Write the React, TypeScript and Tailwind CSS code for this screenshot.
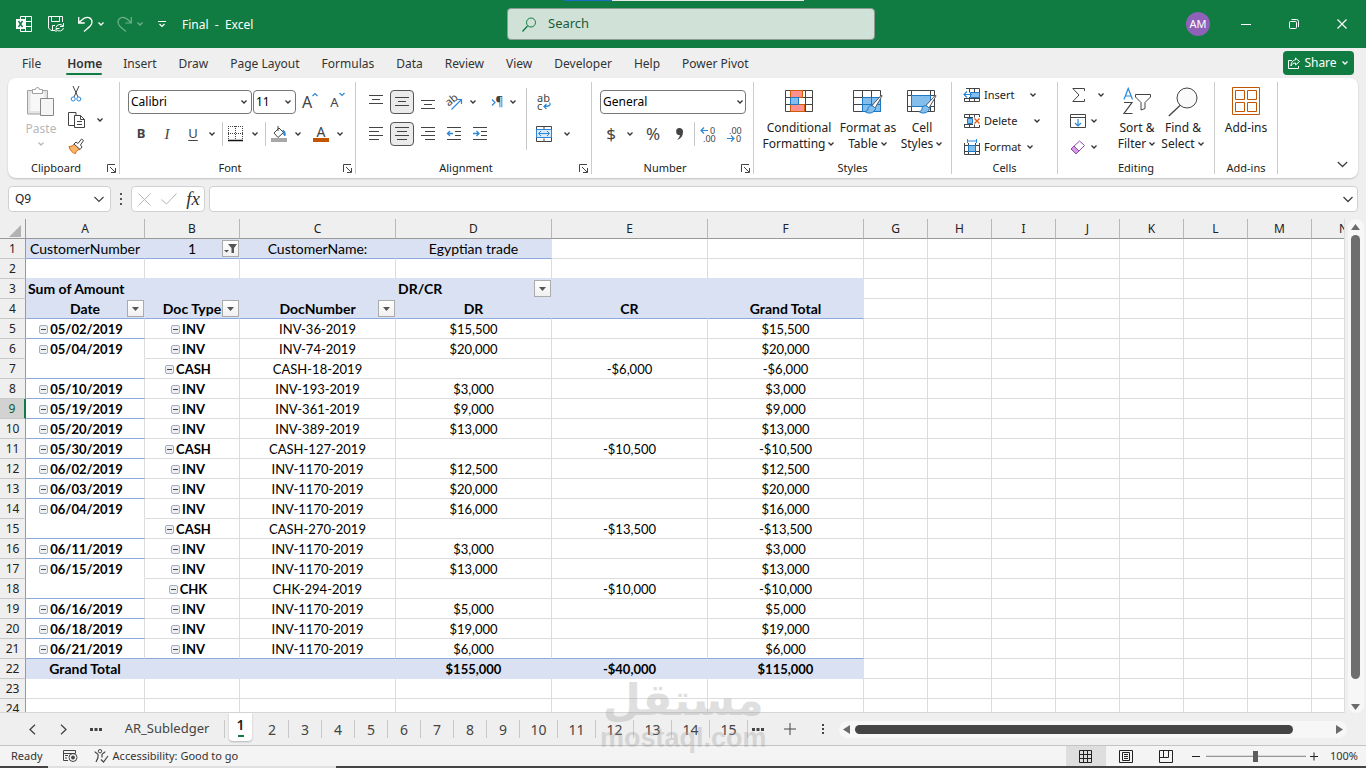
import { useState, type ReactNode } from "react";

type IconProps = { w: number; h: number; children: ReactNode; stroke?: string };

function Icon({ w, h, children, stroke = "#444444" }: IconProps) {
  return (
    <svg
      width={w}
      height={h}
      viewBox={`0 0 ${w} ${h}`}
      fill="none"
      stroke={stroke}
      className="shrink-0 overflow-visible"
      aria-hidden="true"
    >
      {children}
    </svg>
  );
}

function Chevron({ stroke = "#333333" }: { stroke?: string }) {
  return (
    <Icon w={8} h={6} stroke={stroke}>
      <path d="M1.500 1.500 4 4 6.500 1.500" strokeWidth="1.300" />
    </Icon>
  );
}

function DropButton({ label, className = "mr-1" }: { label: string; className?: string }) {
  return (
    <button aria-label={label} className={`flex h-6 w-3 shrink-0 items-center justify-center ${className}`}>
      <Chevron />
    </button>
  );
}

type ToolProps = { label: string; children: ReactNode; active?: boolean };

function Tool({ label, children, active }: ToolProps) {
  return (
    <button
      aria-label={label}
      className={
        active
          ? "mx-px flex h-6 w-6 shrink-0 items-center justify-center rounded border border-[#555555] bg-[#ebebeb]"
          : "flex h-6 w-[26px] shrink-0 items-center justify-center"
      }
    >
      {children}
    </button>
  );
}

function Divider({ className = "h-6" }: { className?: string }) {
  return <span className={`w-px shrink-0 bg-[#c8c8c8] ${className}`} />;
}

// Each line is [x, width], one every four pixels
function Lines({ rows }: { rows: [number, number][] }) {
  return (
    <Icon w={14} h={14}>
      {rows.map(([x, width], i) => (
        <path key={i} d={`M${x} ${i * 4 + 0.5}h${width}`} />
      ))}
    </Icon>
  );
}

function Launcher({ label }: { label: string }) {
  return (
    <button aria-label={label} className="flex h-4 w-[15px] items-center justify-center">
      <Icon w={9} h={9}>
        <path d="M8 .5H.5V8M3 3l5 5M8.500 4v4.500H4" />
      </Icon>
    </button>
  );
}

type GroupProps = {
  title: string;
  className: string;
  body?: string;
  launcher?: boolean;
  children: ReactNode;
};

function Group({ title, className, body = "", launcher, children }: GroupProps) {
  return (
    <section className={`my-1 flex shrink-0 flex-col border-r border-[#cccccc] ${className}`}>
      <div className={`h-[78px] shrink-0 ${body}`}>{children}</div>
      <div className="flex h-4 shrink-0 items-center text-[11px] leading-4 text-[#222222]">
        <span className="flex-1 text-center">{title}</span>
        {launcher && <Launcher label={`${title} settings`} />}
      </div>
    </section>
  );
}

type BigProps = { lines: string[]; className: string; drop?: boolean; children: ReactNode };

function BigButton({ lines, className, drop = true, children }: BigProps) {
  return (
    <button className={`flex shrink-0 flex-col items-center text-[12px] leading-4 text-[#222222] ${className}`}>
      <span className="flex h-9 items-center">{children}</span>
      {lines.map((line, i) => (
        <span key={line} className="flex items-center gap-0.5 whitespace-nowrap">
          {line}
          {drop && i === lines.length - 1 && <Chevron />}
        </span>
      ))}
    </button>
  );
}

function TitleBar() {
  return (
    <header className="relative flex h-12 shrink-0 items-center bg-[#107c41] text-white">
      <div className="absolute top-0 left-[564px] flex h-px w-60">
        <span className="w-12 bg-[#1a6fc4]" />
        <span className="flex-1 bg-[#e8e8e8]" />
      </div>
      <div className="flex w-[507px] shrink-0 items-center pl-4">
        <Icon w={16} h={16} stroke="#ffffff">
          <path d="M4.500 3V.5h11v15h-11V13M9.500 .5v15M9 5.500h6.500M9 10.500h6.500" />
          <path d="M0 3h9v10H0z" fill="#ffffff" stroke="none" />
          <path d="m2.500 5 4 6M6.500 5l-4 6" stroke="#107c41" strokeWidth="1.400" />
        </Icon>
        <button aria-label="Save" className="ml-4">
          <Icon w={16} h={16} stroke="#ffffff">
            <path d="M7 14.500H3L.5 12V.5h14V6M3.500 .5v5h8v-5M4.500 14V9.500H7" />
            <path d="M8 11.500a4 4 0 0 1 7-1.500M15.500 7v3.500H12M15.500 12a4 4 0 0 1-7 1.500M8 16v-3.500h3.500" />
          </Icon>
        </button>
        <button aria-label="Undo" className="ml-3.5 flex items-center gap-1">
          <Icon w={15} h={16} stroke="#ffffff">
            <path d="M.7 1v6h6M1 6.500 5 3c4-3.500 9-1 9 3 0 3-2 4.500-8 9.500" strokeWidth="1.300" />
          </Icon>
          <Chevron stroke="#ffffff" />
        </button>
        <button aria-label="Redo" disabled className="ml-3 flex items-center gap-1 opacity-40">
          <Icon w={15} h={16} stroke="#ffffff">
            <path d="M14.300 1v6h-6M14 6.500 10 3C6-.5 1 2 1 6c0 3 2 4.500 8 9.500" strokeWidth="1.200" />
          </Icon>
          <Chevron stroke="#ffffff" />
        </button>
        <button aria-label="Customize toolbar" className="ml-3.5">
          <Icon w={8} h={8} stroke="#ffffff">
            <path d="M0 1.500h8M1.500 4 4 6.500 6.500 4" strokeWidth="1.200" />
          </Icon>
        </button>
        <h1 className="ml-4 pt-px text-[12px] whitespace-pre">Final  -  Excel</h1>
      </div>
      <label className="flex h-8 w-[368px] shrink-0 items-center rounded-sm border border-[#8c9c92] bg-[#d0e2d8] pl-3.5 text-[#185c37]">
        <Icon w={14} h={15} stroke="#107c41">
          <circle cx="9" cy="5.500" r="4.500" />
          <path d="M5.500 9 .5 14.500" strokeWidth="1.300" />
        </Icon>
        <input
          aria-label="Search"
          placeholder="Search"
          className="ml-3 w-full bg-transparent text-[13px] outline-none placeholder:text-[#185c37]"
        />
      </label>
      <div className="flex flex-1 items-center justify-end">
        <button className="mr-3 flex h-6 w-6 items-center justify-center rounded-full bg-[#8f61b8] text-[11px]">AM</button>
        <button aria-label="Minimize" className="flex w-12 justify-center">
          <Icon w={10} h={11} stroke="#ffffff">
            <path d="M0 5.500h10" />
          </Icon>
        </button>
        <button aria-label="Restore" className="flex w-12 justify-center">
          <Icon w={10} h={11} stroke="#ffffff">
            <rect x=".5" y="2.500" width="7" height="7" rx="1" />
            <path d="M2.500 .5h5a2 2 0 0 1 2 2v5.500" />
          </Icon>
        </button>
        <button aria-label="Close" className="flex w-12 justify-center">
          <Icon w={10} h={10} stroke="#ffffff">
            <path d="m.5.5 9 9M9.500.5l-9 9" strokeWidth="1.200" />
          </Icon>
        </button>
      </div>
    </header>
  );
}

const menu = [
  "File",
  "Home",
  "Insert",
  "Draw",
  "Page Layout",
  "Formulas",
  "Data",
  "Review",
  "View",
  "Developer",
  "Help",
  "Power Pivot",
];

function MenuBar() {
  return (
    <nav className="flex h-[30px] shrink-0 items-center pr-3 pl-[11px] text-[12px] text-[#333333]">
      {menu.map((name) => (
        <button
          key={name}
          className={
            name === "Home"
              ? "relative ml-1 flex h-full items-center pt-0.5 pr-2.5 pl-[11px] font-semibold text-[#333333] after:absolute after:inset-x-2.5 after:bottom-[3px] after:h-0.5 after:rounded after:bg-[#107c41]"
              : "h-full px-[11px] pt-0.5 whitespace-nowrap"
          }
        >
          {name}
        </button>
      ))}
      <button className="ml-auto flex h-6 w-[71px] items-center justify-center gap-1 rounded bg-[#107c41] text-white">
        <Icon w={12} h={12} stroke="#ffffff">
          <path d="M4 3.500H.5v8h10V9M7.500 1l4 3.500-4 3.500V6C5 6 4 7 3 9c0-3 1.500-6 4.500-6z" />
        </Icon>
        Share
        <Chevron stroke="#ffffff" />
      </button>
    </nav>
  );
}

function Brush() {
  return (
    <>
      <path d="M28.500 7 19 17.500l3 2.500L29 8z" fill="#ffffff" stroke="#555555" />
      <path d="M20 18c-3-1-5 .5-5 3 0 1.500-1.500 2.500-3 2.500 3 3 10 1.500 10.500-3z" fill="#83beec" stroke="#1e78c8" />
    </>
  );
}

function Ribbon() {
  return (
    <div className="mx-2 flex h-[100px] shrink-0 overflow-hidden rounded-lg bg-white shadow-[0_1px_2px_rgba(0,0,0,0.2)]">
      <Group title="Clipboard" launcher className="w-28" body="pl-3">
        <div className="flex pt-0.5">
          <button disabled className="flex w-[42px] flex-col items-center pt-0.5 text-[12px] leading-4 text-[#b8b8b8]">
            <Icon w={28} h={31} stroke="#a0a0a0">
              <path d="M.5 4.500h20V28H.5z" fill="#e4e4e4" />
              <path d="M3.500 7h14v18h-14z" fill="#f8f8f8" stroke="none" />
              <path d="M5.500 7.500v-4h3a2 2 0 0 1 4 0h3v4z" fill="#ffffff" />
              <path d="M13.500 12.500h13v17h-13z" fill="#f5f5f5" stroke="#888888" />
            </Icon>
            <span className="mt-1">Paste</span>
            <span className="mt-1">
              <Chevron stroke="#b8b8b8" />
            </span>
          </button>
          <div className="ml-1 flex flex-col">
            <button aria-label="Cut" className="flex h-5 w-5 items-center justify-center">
              <Icon w={10} h={16}>
                <path d="M2 0 7 11M8 0 3 11" />
                <circle cx="2.200" cy="13" r="2" stroke="#2b88d8" />
                <circle cx="7.800" cy="13" r="2" stroke="#2b88d8" />
              </Icon>
            </button>
            <div className="mt-1 flex items-center">
              <button aria-label="Copy" className="flex h-6 w-5 items-center justify-center">
                <Icon w={17} h={16}>
                  <path d="M6 13.500H.5V.5H8V3" />
                  <path d="M6.500 3.500h6l4 4v8h-10zM12.500 3.500v4h4M9 9.500h5M9 12.500h5" />
                </Icon>
              </button>
              <DropButton label="Copy options" className="ml-2" />
            </div>
            <button aria-label="Format painter" className="mt-1 flex h-5 w-5 items-center justify-center">
              <Icon w={16} h={16}>
                <path d="M1 8.500c3 0 4-1 5-2.500l6 5.500c-2 0-4 1.500-4.500 4C5 15.500 2 12.500 1 8.500z" fill="#f8b46a" stroke="#d8680c" />
                <path d="m6 6 2-2 2 1.500 3.500-4.500 2 1.500-3 4.500L14 9l-2 2.500z" fill="#ffffff" />
              </Icon>
            </button>
          </div>
        </div>
      </Group>

      <Group title="Font" launcher className="w-[236px]" body="pl-2">
        <div className="flex items-center pt-2">
          <div className="grid h-6 w-[124px] items-center">
            <select aria-label="Font name" className="col-start-1 row-start-1 h-6 appearance-none rounded border border-[#777777] bg-white pl-0.5 text-[12px] text-black">
              <option>Calibri</option>
            </select>
            <span className="pointer-events-none col-start-1 row-start-1 mr-1 justify-self-end">
              <Chevron />
            </span>
          </div>
          <div className="ml-px grid h-6 w-[43px] items-center">
            <select aria-label="Font size" className="col-start-1 row-start-1 h-6 appearance-none rounded border border-[#777777] bg-white pl-0.5 text-[12px] text-black">
              <option>11</option>
            </select>
            <span className="pointer-events-none col-start-1 row-start-1 mr-1 justify-self-end">
              <Chevron />
            </span>
          </div>
          <button aria-label="Increase font size" className="ml-1.5 flex items-start text-[16px] leading-5 text-[#444444]">
            A
            <Icon w={6} h={5} stroke="#2b88d8">
              <path d="M.5 4 3 1.500 5.500 4" strokeWidth="1.200" />
            </Icon>
          </button>
          <button aria-label="Decrease font size" className="ml-3 flex items-start text-[13px] leading-5 text-[#444444]">
            A
            <Icon w={6} h={5} stroke="#2b88d8">
              <path d="M.5 1 3 3.500 5.500 1" strokeWidth="1.200" />
            </Icon>
          </button>
        </div>
        <div className="mt-2 flex items-center text-[13px] text-[#444444]">
          <Tool label="Bold">
            <b>B</b>
          </Tool>
          <Tool label="Italic">
            <i className="font-['Liberation_Serif',serif] text-[15px]">I</i>
          </Tool>
          <Tool label="Underline">
            <span className="underline underline-offset-2">U</span>
          </Tool>
          <DropButton label="Underline options" />
          <Divider />
          <Tool label="Borders">
            <Icon w={16} h={16}>
              <path d="M0 .5h15M0 7.500h15M.5 0v14M7.500 0v14M14.500 0v14" strokeDasharray="1 1" />
              <path d="M0 14.500h15" stroke="#111111" strokeWidth="1.500" />
            </Icon>
          </Tool>
          <DropButton label="Border options" />
          <Divider />
          <Tool label="Fill colour">
            <Icon w={16} h={16}>
              <path d="m3 7 5-5 4.500 4.500L7 11.500zM7 0v5" />
              <path d="M12 4c2 1 2.500 3 2 6-1.500-1-1.500-2-2-6z" fill="#2b88d8" stroke="#2b88d8" />
              <path d="M0 12h16v4H0z" fill="#a8a8a8" stroke="none" />
            </Icon>
          </Tool>
          <DropButton label="Fill options" />
          <Tool label="Font colour">
            <span className="flex w-4 flex-col items-center border-b-4 border-[#c45500] text-[14px] leading-3">A</span>
          </Tool>
          <DropButton label="Font colour options" />
        </div>
      </Group>

      <Group title="Alignment" launcher className="w-[236px]" body="pl-[7px]">
        <div className="flex">
          <div className="flex-1">
            <div className="flex items-center pt-2">
              <Tool label="Top align">
                <Icon w={14} h={14}>
                  <path d="M0 .5h14M3 4.500h8M0 8.500h14" />
                </Icon>
              </Tool>
              <Tool label="Middle align" active>
                <Icon w={14} h={14}>
                  <path d="M0 2.500h14M3 6.500h8M0 10.500h14" />
                </Icon>
              </Tool>
              <Tool label="Bottom align">
                <Icon w={14} h={14}>
                  <path d="M0 5.500h14M3 9.500h8M0 13.500h14" />
                </Icon>
              </Tool>
              <Tool label="Orientation">
                <Icon w={17} h={16} stroke="#2b88d8">
                  <text x="0" y="11" fontSize="11" fill="#444444" stroke="none" transform="rotate(-40 4 8)">
                    ab
                  </text>
                  <path d="M5.500 15.500 15 6M11 5.500h4.500V10" strokeWidth="1.200" />
                </Icon>
              </Tool>
              <DropButton label="Orientation options" />
              <button aria-label="Text direction" className="ml-1 flex h-6 w-5 items-center justify-center text-[12px] text-[#444444]">
                <Icon w={5} h={7} stroke="#2b88d8">
                  <path d="m1 .5 3 3-3 3" strokeWidth="1.200" />
                </Icon>
                ¶
              </button>
              <DropButton label="Direction options" />
            </div>
            <div className="mt-2 flex items-center">
              <Tool label="Align left">
                <Lines rows={[[0, 14], [0, 10], [0, 14], [0, 10]]} />
              </Tool>
              <Tool label="Centre" active>
                <Lines rows={[[0, 14], [2, 10], [0, 14], [2, 10]]} />
              </Tool>
              <Tool label="Align right">
                <Lines rows={[[0, 14], [4, 10], [0, 14], [4, 10]]} />
              </Tool>
              <Tool label="Decrease indent">
                <Icon w={14} h={14}>
                  <path d="M0 .5h14M8 4.500h6M8 8.500h6M0 12.500h14" />
                  <path d="M0 6.500h6M3 4 .5 6.500 3 9" stroke="#2b88d8" strokeWidth="1.300" />
                </Icon>
              </Tool>
              <Tool label="Increase indent">
                <Icon w={14} h={14}>
                  <path d="M0 .5h14M8 4.500h6M8 8.500h6M0 12.500h14" />
                  <path d="M0 6.500h6M3.500 4 6 6.500 3.500 9" stroke="#2b88d8" strokeWidth="1.300" />
                </Icon>
              </Tool>
            </div>
          </div>
          <Divider className="mt-1.5 h-[62px]" />
          <div className="flex w-16 flex-col pt-2 pl-1">
            <Tool label="Wrap text">
              <Icon w={15} h={17} stroke="#2b88d8">
                <text x="0" y="8" fontSize="11" fill="#444444" stroke="none">ab</text>
                <text x="0" y="16" fontSize="11" fill="#444444" stroke="none">c</text>
                <path d="M12.500 8.500c2 3-1 4-5.500 4M9.500 10 7 12.500 9.500 15" strokeWidth="1.200" />
              </Icon>
            </Tool>
            <div className="mt-2 flex">
              <Tool label="Merge and centre">
                <Icon w={16} h={16}>
                  <path d="M.5.5h15v15H.5zM8 .5v3M8 12.500v3" />
                  <path d="M.5 3.500h15v8H.5z" fill="#d5e9f8" stroke="#2b88d8" />
                  <path d="M3 7.500h10M5 5 2.500 7.500 5 10M11 5l2.500 2.500L11 10" stroke="#2b88d8" />
                </Icon>
              </Tool>
              <DropButton label="Merge options" className="ml-1" />
            </div>
          </div>
        </div>
      </Group>

      <Group title="Number" launcher className="w-[162px]" body="pl-2">
        <div className="flex pt-2">
          <div className="grid h-6 w-[146px] items-center">
            <select aria-label="Number format" className="col-start-1 row-start-1 h-6 appearance-none rounded border border-[#777777] bg-white pl-0.5 text-[12px] text-black">
              <option>General</option>
            </select>
            <span className="pointer-events-none col-start-1 row-start-1 mr-0.5 justify-self-end">
              <Chevron />
            </span>
          </div>
        </div>
        <div className="mt-2 flex items-center text-[17px] text-[#444444]">
          <button className="h-6 w-[22px] leading-6">$</button>
          <DropButton label="Currency options" className="mx-0.5" />
          <button className="ml-1 h-6 w-[22px] leading-6">%</button>
          <button aria-label="Comma style" className="flex h-6 w-[30px] items-center justify-center">
            <Icon w={9} h={14}>
              <path d="M4.500 1a3.500 3.500 0 0 1 3.500 4c0 4-2 6.500-6 8 2-2 2.800-3.500 2.800-5A3.500 3.500 0 1 1 4.500 1z" fill="#444444" stroke="none" />
            </Icon>
          </button>
          <Divider />
          <Tool label="Increase decimal">
            <Icon w={17} h={17} stroke="#2b88d8">
              <text x="10" y="8" fontSize="9" fill="#444444" stroke="none">0</text>
              <text x="3" y="16" fontSize="9" fill="#444444" stroke="none">.00</text>
              <path d="M1 4.500h7M4 1.500l-3 3 3 3" strokeWidth="1.200" />
            </Icon>
          </Tool>
          <Tool label="Decrease decimal">
            <Icon w={17} h={17} stroke="#2b88d8">
              <text x="3" y="8" fontSize="9" fill="#444444" stroke="none">.00</text>
              <text x="10" y="16" fontSize="9" fill="#444444" stroke="none">0</text>
              <path d="M1 12.500h7M5 9.500l3 3-3 3" strokeWidth="1.200" />
            </Icon>
          </Tool>
        </div>
      </Group>

      <Group title="Styles" className="w-[198px]" body="pl-2">
        <div className="flex pt-0.5">
          <BigButton lines={["Conditional", "Formatting"]} className="w-[74px]">
            <Icon w={28} h={24}>
              <path d="M.5.5h27v21H.5zM.5 7.500h27M.5 14.500h27M5.500 .5v21M13.500 .5v21M20.500.5v21" />
              <path d="M5.500.5h12v7h-12zM5.500 14.500h14v7h-14z" fill="#ff9191" stroke="#d25a00" />
              <path d="M5.500 7.500h8v7h-8z" fill="#83beec" stroke="#1e78c8" />
            </Icon>
          </BigButton>
          <BigButton lines={["Format as", "Table"]} className="w-16">
            <Icon w={30} h={28}>
              <path d="M.5 2.500h27v21H.5zM.5 9.500h27M.5 16.500h27M9.500 2.500v21M18.500 2.500v21" />
              <path d="M9.500 9.500h18v14h-18z" fill="#83beec" stroke="#1e78c8" />
              <path d="M9.500 16.500h18M18.500 9.500v14" stroke="#1e78c8" />
              <Brush />
            </Icon>
          </BigButton>
          <BigButton lines={["Cell", "Styles"]} className="w-11">
            <Icon w={30} h={28}>
              <path d="M.5 2.500h27v21H.5zM.5 7.500h27M.5 18.500h27M4.500 2.500v21M23.500 2.500v21" />
              <path d="M4.500 7.500h19v11h-19z" fill="#83beec" stroke="#1e78c8" />
              <Brush />
            </Icon>
          </BigButton>
        </div>
      </Group>

      <Group title="Cells" className="w-[106px]" body="pl-3">
        <div className="flex flex-col text-[11px] text-[#222222]">
          <button className="flex h-[26px] items-center gap-1">
            <Icon w={16} h={14}>
              <path d="M2 .5h13.500v13H.5V10M5.500.5v4M10.500 .5v13M.5 10.500h15M5.500 9v4.500" />
              <path d="M6.500 4.500h9v5h-9z" fill="#83beec" stroke="#1e78c8" />
              <path d="M0 6.500h8M3 3.500l-3 3 3 3" stroke="#2b88d8" strokeWidth="1.200" />
            </Icon>
            <span className="w-[41px] text-left">Insert</span>
            <Chevron />
          </button>
          <button className="flex h-[26px] items-center gap-1">
            <Icon w={16} h={14}>
              <path d="M.5 3V.5h15V3M.5 11v2.500h15V11M5.500.5v3M10.500.5v3M5.500 10.500v3M10.500 10.500v3M0 3.500h9M0 10.500h9" />
              <path d="M3.500 4.500h5v5h-5z" fill="#83beec" stroke="#1e78c8" />
              <path d="m10.500 4.500 5 5M15.500 4.500l-5 5" stroke="#e8590c" strokeWidth="1.300" />
            </Icon>
            <span className="w-[45px] text-left">Delete</span>
            <Chevron />
          </button>
          <button className="flex h-[26px] items-center gap-1">
            <Icon w={16} h={16}>
              <path d="M.5 4v11.500h15V4M.5 6.500h15M.5 12.500h15M4.500 4v11.500M11.500 4v11.500" />
              <path d="M4.500 6.500h7v6h-7z" fill="#83beec" stroke="#1e78c8" />
              <path d="M3.500 0v4M12.500 0v4M3.500 2h9" stroke="#2b88d8" />
            </Icon>
            <span className="w-[38px] text-left">Format</span>
            <Chevron />
          </button>
        </div>
      </Group>

      <Group title="Editing" className="w-[157px]" body="pl-3">
        <div className="flex">
          <div className="flex w-11 shrink-0 flex-col">
            <button aria-label="AutoSum" className="flex h-[26px] items-center gap-3 pl-0.5">
              <Icon w={13} h={14}>
                <path d="M12.500 3V.5H.8L7 7 .8 13.500h11.700V11" />
              </Icon>
              <Chevron />
            </button>
            <button aria-label="Fill" className="flex h-[26px] items-center gap-1">
              <Icon w={16} h={14}>
                <path d="M.5.5h15v13H.5zM.5 3.500h15" />
                <path d="M8 5v7M5 9l3 3 3-3" stroke="#2b88d8" strokeWidth="1.200" />
              </Icon>
              <Chevron />
            </button>
            <button aria-label="Clear" className="flex h-[26px] items-center gap-1">
              <Icon w={16} h={15} stroke="#8f4bab">
                <path d="M1 9 9.500 1l5 4.500L6 14z" fill="#ffffff" />
                <path d="m1 9 3-3 5 5-3 3z" fill="#d59ae0" />
              </Icon>
              <Chevron />
            </button>
          </div>
          <div className="flex pt-0.5">
            <BigButton lines={["Sort &", "Filter"]} className="w-[46px]">
              <Icon w={28} h={30}>
                <path d="M1 12.500 5.200 1.500 9.500 12.500M2.500 9h5.500" stroke="#2b88d8" strokeWidth="1.200" />
                <path d="M1 15.500h8L1 26.500h8.500" strokeWidth="1.200" />
                <path d="M12.500 7.500h15v2.500l-5.500 5.500v6l-4 1.500v-7.500L12.500 10z" />
              </Icon>
            </BigButton>
            <BigButton lines={["Find &", "Select"]} className="w-[46px]">
              <Icon w={30} h={30}>
                <circle cx="19" cy="11" r="10" fill="#fafafa" />
                <path d="M12 18.500.8 29" strokeWidth="1.300" />
              </Icon>
            </BigButton>
          </div>
        </div>
      </Group>

      <Group title="Add-ins" className="w-[63px]">
        <div className="flex justify-center pt-0.5">
          <BigButton lines={["Add-ins"]} drop={false} className="w-14">
            <Icon w={28} h={30} stroke="#c45500">
              <path d="M.5.5h27v27H.5zM3.500 3.500h9v9h-9zM15.500 3.500h9v9h-9zM3.500 15.500h9v9h-9zM15.500 15.500h9v9h-9z" />
            </Icon>
          </BigButton>
        </div>
      </Group>

      <div className="flex flex-1 items-end justify-end pr-2.5 pb-2.5">
        <button aria-label="Collapse ribbon">
          <Icon w={11} h={7}>
            <path d="m.8 1 4.700 4.500L10.200 1" strokeWidth="1.300" />
          </Icon>
        </button>
      </div>
    </div>
  );
}

function FormulaBar() {
  return (
    <div className="mt-2 flex h-[26px] shrink-0 items-center px-2">
      <label className="flex h-full w-[103px] shrink-0 items-center rounded border border-[#d0d0d0] bg-white px-1.5">
        <input aria-label="Name box" defaultValue="Q9" className="w-full text-[12px] text-[#222222] outline-none" />
        <Icon w={10} h={7}>
          <path d="m.5 1 4.500 4.500L9.500 1" strokeWidth="1.200" />
        </Icon>
      </label>
      <span className="flex w-5 shrink-0 justify-center">
        <Icon w={3} h={12} stroke="none">
          <path d="M0 0h2v2H0zM0 5h2v2H0zM0 10h2v2H0z" fill="#555555" />
        </Icon>
      </span>
      <div className="flex h-full w-[74px] shrink-0 items-center justify-between rounded border border-[#d0d0d0] bg-white pr-1 pl-1.5">
        <button aria-label="Cancel" disabled>
          <Icon w={13} h={13} stroke="#b5b5b5">
            <path d="m.5.5 12 12M12.500.5l-12 12" />
          </Icon>
        </button>
        <button aria-label="Enter" disabled>
          <Icon w={16} h={12} stroke="#b5b5b5">
            <path d="M.5 6.500 5.500 11 15.500.5" />
          </Icon>
        </button>
        <button aria-label="Insert function" className="font-['Liberation_Serif',serif] text-[19px] leading-5 text-[#333333] italic">
          fx
        </button>
      </div>
      <label className="ml-1 flex h-full flex-1 items-center rounded border border-[#d0d0d0] bg-white pr-1">
        <input aria-label="Formula" className="w-full px-2 text-[12px] outline-none" />
        <Icon w={10} h={7}>
          <path d="m.5 1 4.500 4.500L9.500 1" strokeWidth="1.300" />
        </Icon>
      </label>
    </div>
  );
}

const columns = ["A", "B", "C", "D", "E", "F", "G", "H", "I", "J", "K", "L", "M", "N"];
const columnWidths = [119, 95, 156, 156, 156, 156, 64, 64, 64, 64, 64, 64, 64, 64];

// date, type, document, debit, credit, total
const entries = [
  ["05/02/2019", "INV", "INV-36-2019", "$15,500", "", "$15,500"],
  ["05/04/2019", "INV", "INV-74-2019", "$20,000", "", "$20,000"],
  ["", "CASH", "CASH-18-2019", "", "-$6,000", "-$6,000"],
  ["05/10/2019", "INV", "INV-193-2019", "$3,000", "", "$3,000"],
  ["05/19/2019", "INV", "INV-361-2019", "$9,000", "", "$9,000"],
  ["05/20/2019", "INV", "INV-389-2019", "$13,000", "", "$13,000"],
  ["05/30/2019", "CASH", "CASH-127-2019", "", "-$10,500", "-$10,500"],
  ["06/02/2019", "INV", "INV-1170-2019", "$12,500", "", "$12,500"],
  ["06/03/2019", "INV", "INV-1170-2019", "$20,000", "", "$20,000"],
  ["06/04/2019", "INV", "INV-1170-2019", "$16,000", "", "$16,000"],
  ["", "CASH", "CASH-270-2019", "", "-$13,500", "-$13,500"],
  ["06/11/2019", "INV", "INV-1170-2019", "$3,000", "", "$3,000"],
  ["06/15/2019", "INV", "INV-1170-2019", "$13,000", "", "$13,000"],
  ["", "CHK", "CHK-294-2019", "", "-$10,000", "-$10,000"],
  ["06/16/2019", "INV", "INV-1170-2019", "$5,000", "", "$5,000"],
  ["06/18/2019", "INV", "INV-1170-2019", "$19,000", "", "$19,000"],
  ["06/21/2019", "INV", "INV-1170-2019", "$6,000", "", "$6,000"],
];

const sheet: string[][] = [
  ["CustomerNumber", "1", "CustomerName:", "Egyptian trade"],
  [],
  ["Sum of Amount", "", "", "DR/CR"],
  ["Date", "Doc Type", "DocNumber", "DR", "CR", "Grand Total"],
  ...entries,
  ["Grand Total", "", "", "$155,000", "-$40,000", "$115,000"],
  [],
  [],
];

const filters = ["1-1", "3-3", "4-0", "4-1", "4-2"];

function cellClass(row: number, col: number) {
  const shaded = (row === 1 && col < 4) || ((row === 3 || row === 4 || row === 22) && col < 6);
  const classes = ["h-5 border-r border-b p-0 whitespace-nowrap"];

  classes.push(shaded ? "bg-[#d9e1f2] border-r-[#d9e1f2]" : "border-r-[#dcdcdc]");

  if (shaded && (row === 1 || row === 4)) classes.push("border-b-[#8ea9db]");
  else if (shaded || (row === 2 && col < 6)) classes.push("border-b-[#d9e1f2]");
  else if (row === 21 && col < 6) classes.push("border-b-[#8ea9db]");
  else if (col === 0 && row > 4 && row < 22)
    // The line is left out where the next row belongs to the same date
    classes.push(sheet[row][0] === "" ? "border-b-white" : "border-b-[#8ea9db]");
  else classes.push("border-b-[#dcdcdc]");

  if (row === 3 || row === 4 || row === 22 || (row > 4 && col < 2)) classes.push("font-bold");
  if (row < 5 || (row === 22 && col === 0)) classes.push("text-[14px]");
  return classes.join(" ");
}

function FilterButton({ active }: { active: boolean }) {
  return (
    <button
      aria-label="Filter"
      className="absolute top-px right-0 flex h-[17px] w-[17px] items-center justify-center border border-[#ababab] bg-linear-to-b from-white to-[#f0f0f0]"
    >
      {active ? (
        <Icon w={13} h={11} stroke="none">
          <path d="M4 1h9L10 5v5H7.500V5zM0 7h5L2.500 9.500z" fill="#555555" />
        </Icon>
      ) : (
        <Icon w={7} h={4} stroke="none">
          <path d="M0 0h7L3.500 4z" fill="#555555" />
        </Icon>
      )}
    </button>
  );
}

function Collapse() {
  return (
    <button
      aria-label="Collapse"
      className="mr-0.5 flex h-[9px] w-[9px] shrink-0 items-center justify-center rounded-xs border border-[#a3adc0] bg-[#eeeff2]"
    >
      <span className="h-px w-[5px] bg-[#444444]" />
    </button>
  );
}

function Grid() {
  return (
    <div className="mt-[7px] flex min-h-0 flex-1">
      <div className="min-w-0 flex-1 overflow-hidden border-b border-[#d6d6d6]">
        <table className="w-[1274px] table-fixed border-separate border-spacing-0 bg-white font-['Lato','Liberation_Sans',sans-serif] text-[13px] leading-[19px] text-black">
          <colgroup>
            <col className="w-[26px]" />
            {columnWidths.map((width, i) => (
              <col key={i} style={{ width }} />
            ))}
          </colgroup>
          <thead>
            <tr className="font-['Noto_Sans',sans-serif] text-[12px] leading-[18px] text-[#222222]">
              <th className="h-5 border-r border-b border-[#999999] bg-[#efefef] p-0">
                <div className="flex justify-end pt-1 pr-1">
                  <Icon w={12} h={12} stroke="none">
                    <path d="M12 0v12H0z" fill="#b2b2b2" />
                  </Icon>
                </div>
              </th>
              {columns.map((name) => (
                <th key={name} className="h-5 border-r border-b border-r-[#b8b8b8] border-b-[#999999] bg-[#efefef] p-0 font-normal">
                  {name}
                </th>
              ))}
            </tr>
          </thead>
          <tbody>
            {sheet.map((cells, i) => {
              const row = i + 1;
              return (
                <tr key={row}>
                  <th
                    className={
                      row === 9
                        ? "h-5 border-r-2 border-b border-r-[#107c41] border-b-[#c8c8c8] bg-[#d2d2d2] p-0 font-normal text-[#0e5c30]"
                        : "h-5 border-r border-b border-r-[#999999] border-b-[#c8c8c8] bg-[#efefef] p-0 font-normal text-[#222222]"
                    }
                  >
                    <div className="h-[19px] pt-px font-['Noto_Sans',sans-serif] text-[12px] leading-[18px]">{row}</div>
                  </th>
                  {columns.map((name, col) => {
                    const text = cells[col] ?? "";
                    const grouped = text !== "" && row > 4 && row < 22 && col < 2;
                    const align = row === 3 ? "pl-0.5" : grouped ? "justify-center pr-2" : "justify-center";
                    return (
                      <td key={name} className={cellClass(row, col)}>
                        <div className={`relative flex h-[19px] items-center pt-px leading-[18px] ${align}`}>
                          {grouped && <Collapse />}
                          {text}
                          {filters.includes(`${row}-${col}`) && <FilterButton active={row === 1} />}
                        </div>
                      </td>
                    );
                  })}
                </tr>
              );
            })}
          </tbody>
        </table>
      </div>
      <div className="flex w-[22px] shrink-0 justify-center border-l border-[#dcdcdc]">
        <div className="flex w-4 flex-col items-center rounded-lg bg-[#f7f7f7] pt-1 pb-0.5">
          <Icon w={9} h={8} stroke="none">
            <path d="M4.500 1 9 7H0z" fill="#6b6b6b" />
          </Icon>
          <div className="mt-1 mb-6 w-[9px] flex-1 rounded-full bg-[#6e6e6e]" />
          <Icon w={9} h={8} stroke="none">
            <path d="M0 1h9L4.500 7z" fill="#6b6b6b" />
          </Icon>
        </div>
      </div>
    </div>
  );
}

const sheets = ["1", "2", "3", "4", "5", "6", "7", "8", "9", "10", "11", "12", "13", "14", "15"];

function SheetTabs() {
  const [current, setCurrent] = useState("1");

  return (
    <div className="flex h-8 shrink-0 items-center text-[14px] text-[#444444]">
      <button aria-label="Previous sheet" className="flex w-9 justify-end">
        <Icon w={7} h={11}>
          <path d="M6 .8 1 5.500l5 4.700" strokeWidth="1.300" />
        </Icon>
      </button>
      <button aria-label="Next sheet" className="ml-6 flex w-2">
        <Icon w={7} h={11}>
          <path d="m1 .8 5 4.700-5 4.700" strokeWidth="1.300" />
        </Icon>
      </button>
      <button aria-label="All sheets" className="ml-[22px] flex w-3">
        <Icon w={12} h={3} stroke="none">
          <path d="M0 0h3v3H0zM4.500 0h3v3h-3zM9 0h3v3H9z" fill="#444444" />
        </Icon>
      </button>
      <button className="flex h-[18px] w-[123px] items-center justify-center border-r border-[#c8c8c8] pl-2 text-[13px]">
        AR_Subledger
      </button>
      {sheets.map((name) =>
        name === current ? (
          <button key={name} className="mx-1 flex h-7 w-[23px] shrink-0 flex-col items-center self-start rounded-b bg-white pt-0.5 leading-5 font-semibold text-[#222222] shadow-[0_1px_2px_rgba(0,0,0,0.25)]">
            {name}
            <span className="h-0.5 w-1.5 bg-[#107c41]" />
          </button>
        ) : (
          <button
            key={name}
            onClick={() => setCurrent(name)}
            className={
              name.length > 1
                ? "flex h-[18px] w-[38px] shrink-0 items-center justify-center border-r border-[#c8c8c8] last-of-type:border-r-0"
                : "flex h-[18px] w-[33px] shrink-0 items-center justify-center border-r border-[#c8c8c8]"
            }
          >
            {name}
          </button>
        )
      )}
      <span className="ml-1 flex">
        <Icon w={12} h={3} stroke="none">
          <path d="M0 0h3v3H0zM4.500 0h3v3h-3zM9 0h3v3H9z" fill="#444444" />
        </Icon>
      </span>
      <button aria-label="New sheet" className="ml-5">
        <Icon w={12} h={12}>
          <path d="M0 6h12M6 0v12" />
        </Icon>
      </button>
      <span className="ml-[26px]">
        <Icon w={3} h={11} stroke="none">
          <path d="M0 0h2v2H0zM0 4h2v2H0zM0 8h2v2H0z" fill="#444444" />
        </Icon>
      </span>
      <div className="mr-[19px] ml-3.5 flex h-[17px] flex-1 items-center rounded-full bg-[#f7f7f7] px-1">
        <Icon w={8} h={9} stroke="none">
          <path d="M7 0v9L0 4.500z" fill="#6b6b6b" />
        </Icon>
        <div className="mr-[42px] ml-1 h-[9px] flex-1 rounded-full bg-[#444444]" />
        <Icon w={8} h={9} stroke="none">
          <path d="M1 0v9l7-4.500z" fill="#6b6b6b" />
        </Icon>
      </div>
    </div>
  );
}

function StatusBar() {
  return (
    <footer className="shrink-0">
      <div className="flex h-[21px] items-center border-t border-[#c4c4c4] bg-[#f4f4f4] pr-2 pl-[11px] text-[11px] text-[#333333]">
        <span>Ready</span>
        <button aria-label="Record macro" className="ml-5">
          <Icon w={15} h={12}>
            <path d="M5 10.500H.5V.5h12V3M.5 3.500h12M2 5.500h3M2 8h2" />
            <circle cx="10" cy="7.500" r="4" />
            <circle cx="10" cy="7.500" r="1.500" fill="#444444" />
          </Icon>
        </button>
        <button className="ml-4 flex items-center gap-1">
          <Icon w={15} h={14}>
            <circle cx="6" cy="2.200" r="1.700" />
            <path d="M1 2.500c0 1.500 3 2 3 3v3l-2 4.500M11 2.500c0 1.500-3 2-3 3v3M7 10.500l2.500 2.500L14 7" strokeWidth="1.200" />
          </Icon>
          Accessibility: Good to go
        </button>
        <div className="ml-auto flex h-full items-center">
          <button aria-label="Normal view" className="flex h-full w-10 items-center justify-center bg-[#dedede]">
            <Icon w={13} h={13} stroke="#222222">
              <path d="M.5.5h12v12H.5zM4.500.5v12M8.500.5v12M.5 4.500h12M.5 8.500h12" />
            </Icon>
          </button>
          <button aria-label="Page layout view" className="flex h-full w-10 items-center justify-center">
            <Icon w={14} h={13} stroke="#222222">
              <path d="M.5.5h13v12H.5zM3.500 2.500h7v8h-7zM5 4.500h4M5 6.500h4M5 8.500h4" />
            </Icon>
          </button>
          <button aria-label="Page break view" className="flex h-full w-10 items-center justify-center">
            <Icon w={14} h={13} stroke="#222222">
              <path d="M.5.5h13v12H.5zM.5 7.500h9v-7M4.500.5v7" />
            </Icon>
          </button>
          <button aria-label="Zoom out" className="ml-1.5">
            <Icon w={8} h={9}>
              <path d="M0 4.500h8" stroke="#222222" />
            </Icon>
          </button>
          <input
            type="range"
            aria-label="Zoom"
            min={10}
            max={190}
            defaultValue={100}
            className="mr-1 ml-1.5 h-3 w-[100px] appearance-none bg-linear-to-b from-transparent from-45% via-[#555555] via-50% to-transparent to-60% [&::-webkit-slider-thumb]:h-[11px] [&::-webkit-slider-thumb]:w-[5px] [&::-webkit-slider-thumb]:appearance-none [&::-webkit-slider-thumb]:bg-[#5c5c5c]"
          />
          <button aria-label="Zoom in">
            <Icon w={8} h={9}>
              <path d="M0 4.500h8M4 .5v8" stroke="#222222" />
            </Icon>
          </button>
          <span className="ml-3">100%</span>
        </div>
      </div>
      <div className="flex h-0.5 bg-[#444444]">
        <span className="ml-12 w-72 bg-[#e0e0e0]" />
      </div>
    </footer>
  );
}

export default function App() {
  return (
    <div className="relative flex h-screen flex-col overflow-hidden bg-[#efefef] font-['Noto_Sans','Open_Sans',sans-serif]">
      <TitleBar />
      <MenuBar />
      <Ribbon />
      <FormulaBar />
      <Grid />
      <SheetTabs />
      <StatusBar />
      <div className="pointer-events-none absolute bottom-4 left-[600px] flex flex-col items-center font-bold text-[#999999] opacity-30">
        <span lang="ar" dir="rtl" className="font-['DejaVu_Sans',sans-serif] text-[44px] leading-[48px]">
          مستقل
        </span>
        <span className="font-['Liberation_Sans',sans-serif] text-[27px] leading-7">mostaql.com</span>
      </div>
    </div>
  );
}
